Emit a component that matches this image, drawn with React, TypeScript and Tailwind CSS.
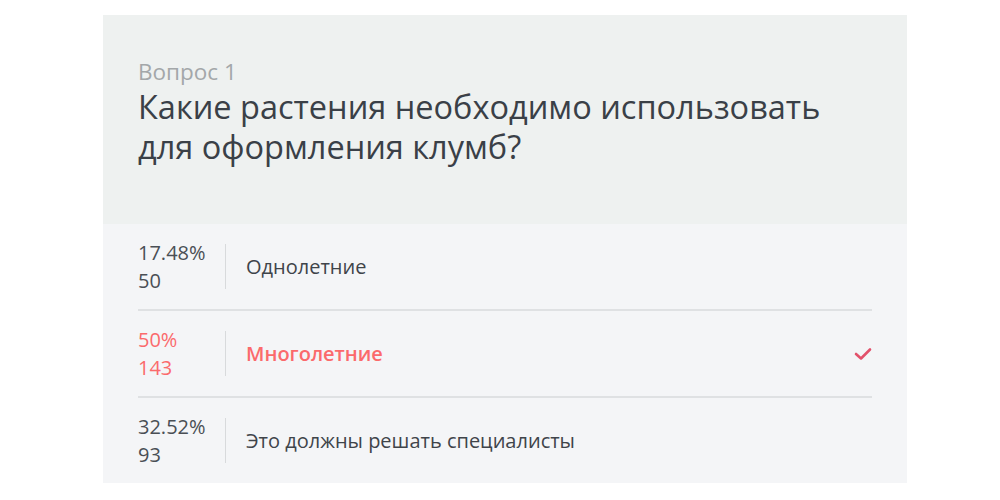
import React from "react";

const rows = [
  { pct: "17.48%", count: "50", text: "Однолетние", correct: false },
  { pct: "50%", count: "143", text: "Многолетние", correct: true },
  { pct: "32.52%", count: "93", text: "Это должны решать специалисты", correct: false },
];

export default function App() {
  return (
    <div className="w-[1000px] h-[500px] bg-white pt-[15px] pl-[103px]" style={{ fontFamily: '"Open Sans", sans-serif' }}>
      <div className="w-[804px] h-[468px] flex flex-col">
        <div className="h-[209px] shrink-0 bg-[#eef1f0] px-[35px] pt-[42px]">
          <div className="text-[22.5px] leading-[30px] text-[#a3a7a9]">Вопрос 1</div>
          <div className="text-[32.5px] leading-[40px] text-[#3a4047]">
            Какие растения необходимо использовать
            <br />
            для оформления клумб?
          </div>
        </div>
        <div className="flex-1 flex flex-col bg-[#f4f5f7] px-[35px]">
          {rows.map((r, i) => (
            <div
              key={i}
              className={`flex items-center ${i < rows.length - 1 ? "h-[87px] shrink-0 border-b-2 border-[#dfe1e3]" : "flex-1"}`}
            >
              <div
                className={`w-[87px] text-[20px] leading-[28px] ${r.correct ? "text-[#fb6a6c]" : "text-[#4a4f55]"}`}
              >
                <div>{r.pct}</div>
                <div>{r.count}</div>
              </div>
              <div className="w-px h-[45px] bg-[#d8dadc]" />
              <div
                className={`flex-1 pl-[20px] text-[20px] ${r.correct ? "text-[#fb6a6c] font-semibold" : "text-[#3f444a]"}`}
              >
                {r.text}
              </div>
              {r.correct && (
                <svg width="18" height="14" viewBox="0 0 18 14">
                  <path d="M2 7 L7 11.5 L16 2.5" fill="none" stroke="#e2516b" strokeWidth="2.6" strokeLinecap="round" strokeLinejoin="round" />
                </svg>
              )}
            </div>
          ))}
        </div>
      </div>
    </div>
  );
}
